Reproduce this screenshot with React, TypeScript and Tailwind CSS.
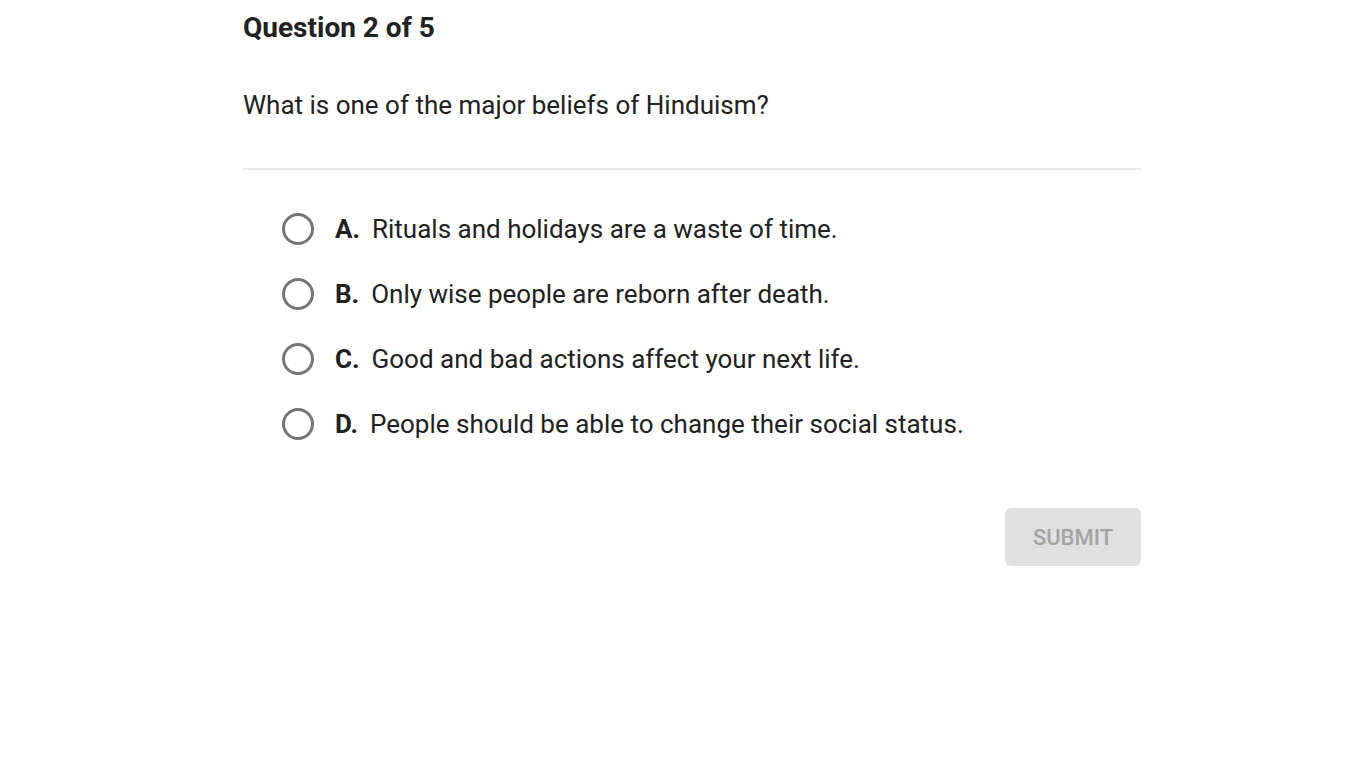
const options = [
  { letter: "A.", text: "Rituals and holidays are a waste of time." },
  { letter: "B.", text: "Only wise people are reborn after death." },
  { letter: "C.", text: "Good and bad actions affect your next life." },
  { letter: "D.", text: "People should be able to change their social status." },
];

export default function App() {
  return (
    <div className="min-h-screen bg-white font-['Roboto',sans-serif] text-[#212121]">
      <div className="ml-[243px] w-[898px]">
        <h1 className="pt-[10px] text-[28px] font-bold leading-[36px]">
          Question 2 of 5
        </h1>
        <p className="mt-[42px] text-[26px] leading-[34px]">
          What is one of the major beliefs of Hinduism?
        </p>
        <div className="mt-[46px] h-[2px] bg-[#e8e8e8]" />
        <ul className="mt-[43px] flex flex-col gap-[33px] pl-[39px]">
          {options.map((o) => (
            <li key={o.letter} className="flex h-[32px] items-center">
              <span className="size-[32px] shrink-0 rounded-full border-[3px] border-[#757575]" />
              <span className="ml-[21px] mr-[12px] text-[26px] font-bold">{o.letter}</span>
              <span className="text-[26px]">{o.text}</span>
            </li>
          ))}
        </ul>
        <div className="mt-[68px] flex justify-end">
          <button className="h-[58px] w-[136px] rounded-[6px] bg-[#e0e0e0] text-[22px] font-medium text-[#a3a3a3]">
            SUBMIT
          </button>
        </div>
      </div>
    </div>
  );
}
